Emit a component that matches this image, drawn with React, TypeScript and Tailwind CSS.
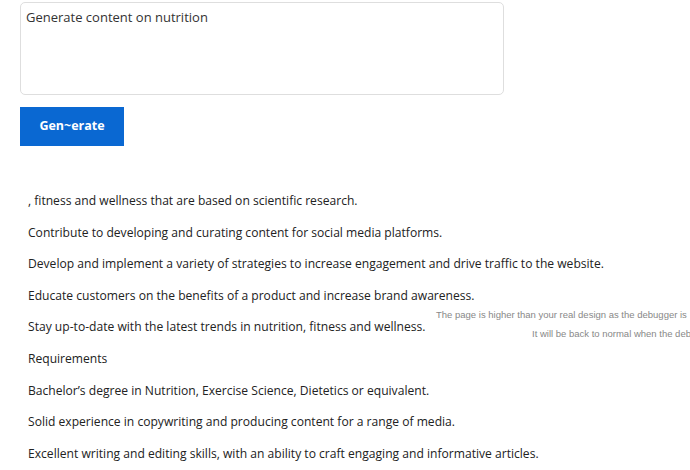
import React from "react";

const lines = [
  ", fitness and wellness that are based on scientific research.",
  "Contribute to developing and curating content for social media platforms.",
  "Develop and implement a variety of strategies to increase engagement and drive traffic to the website.",
  "Educate customers on the benefits of a product and increase brand awareness.",
  "Stay up-to-date with the latest trends in nutrition, fitness and wellness.",
  "Requirements",
  "Bachelor’s degree in Nutrition, Exercise Science, Dietetics or equivalent.",
  "Solid experience in copywriting and producing content for a range of media.",
  "Excellent writing and editing skills, with an ability to craft engaging and informative articles.",
];

export default function App() {
  return (
    <div className="relative w-[690px] h-[470px] overflow-hidden bg-white">
      <div className="pt-[2px] pl-[20px]">
        <textarea
          className="block w-[484px] h-[93px] resize-none rounded-[5px] border border-[#dedede] px-[5px] py-[5px] font-['Open_Sans',sans-serif] text-[13px] leading-[18px] text-[#333] outline-none"
          defaultValue="Generate content on nutrition"
        />
        <button className="mt-[12px] flex h-[39px] w-[104px] items-center justify-center bg-[#0a68d2] font-['Open_Sans',sans-serif] text-[12.5px] font-bold text-white">
          Gen~erate
        </button>
        <div className="mt-[45px] flex flex-col gap-[11.6px] pl-[8px] font-['Open_Sans',sans-serif] text-[12.1px] leading-[20px] text-[#222]">
          {lines.map((l, i) => (
            <p key={i} className="whitespace-nowrap">
              {l}
            </p>
          ))}
        </div>
      </div>
      <div className="absolute left-[436px] top-[309px] whitespace-nowrap font-['Liberation_Sans',Arial,sans-serif] text-[9.5px] leading-[12px] text-[#888]">
        The page is higher than your real design as the debugger is
      </div>
      <div className="absolute left-[532px] top-[328px] whitespace-nowrap font-['Liberation_Sans',Arial,sans-serif] text-[9.5px] leading-[12px] text-[#888]">
        It will be back to normal when the debugger is closed
      </div>
    </div>
  );
}
